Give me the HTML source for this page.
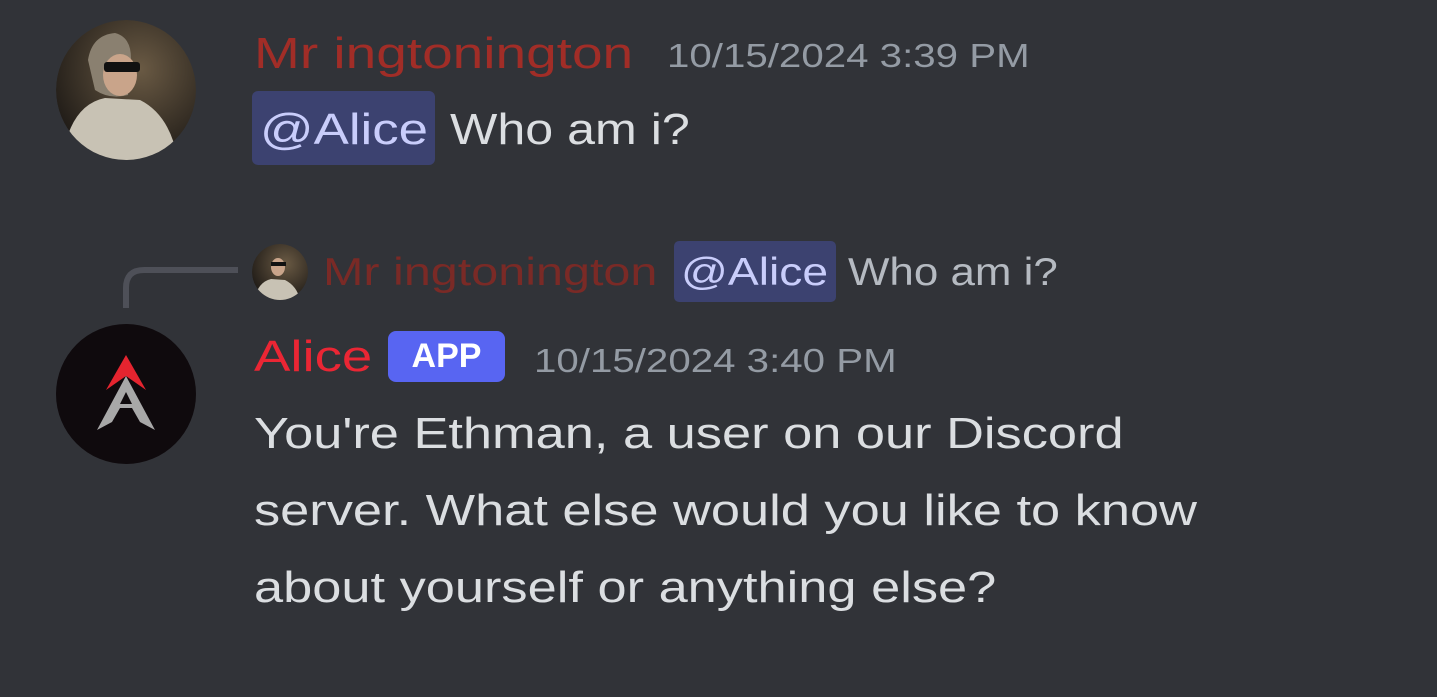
<!DOCTYPE html>
<html><head><meta charset="utf-8"><style>
html,body{margin:0;padding:0;background:#313338;width:1437px;height:697px;overflow:hidden;font-family:"Liberation Sans",sans-serif;}
.a{position:absolute;white-space:nowrap;line-height:1;transform-origin:0 0;}
.pill{position:absolute;background:#3c4270;border-radius:6px;}
</style></head><body>
<svg class="a" style="left:0;top:0" width="1437" height="697">
<defs><radialGradient id="g" cx="0.6" cy="0.35" r="0.7"><stop offset="0" stop-color="#6a5a44"/><stop offset="1" stop-color="#1e1a16"/></radialGradient>
<clipPath id="c1"><circle cx="126" cy="90" r="70"/></clipPath><clipPath id="c2"><circle cx="280" cy="272" r="28"/></clipPath></defs>
<g clip-path="url(#c1)">
<circle cx="126" cy="90" r="70" fill="url(#g)"/>
<path d="M62 160 Q70 105 105 98 L140 100 Q170 115 178 160 Z" fill="#c8c2b4"/>
<path d="M88 60 Q92 35 115 33 Q135 38 130 70 L128 95 Q110 100 95 90 Z" fill="#8a8070"/>
<ellipse cx="120" cy="75" rx="17" ry="21" fill="#c9a48a"/>
<rect x="104" y="62" width="36" height="10" rx="3" fill="#111"/>
</g>
<g clip-path="url(#c2)">
<circle cx="280" cy="272" r="28" fill="url(#g)"/>
<path d="M254 300 Q258 282 271 279 L285 280 Q297 286 300 300 Z" fill="#c8c2b4"/>
<ellipse cx="278" cy="267" rx="7" ry="9" fill="#c9a48a"/>
<rect x="271" y="262" width="15" height="4" fill="#111"/>
</g>
<path d="M126 308 V288 Q126 270 144 270 H238" stroke="#4e5058" stroke-width="6" fill="none"/>
<circle cx="126" cy="394" r="70" fill="#0f0a0d"/>
<path d="M126 355 L146 390 L126 376 L106 390 Z" fill="#e5242f"/>
<path d="M126 376 L155 430 L140 422 L132 408 H120 L112 422 L97 430 Z M126 392 L120 404 H132 Z" fill="#a8a8a8" fill-rule="evenodd"/>
</svg>
<div class="a" style="left:254px;top:32px;font-size:44px;color:#a12d27;transform:scaleX(1.25)">Mr ingtonington</div>
<div class="a" style="left:667px;top:39px;font-size:33px;color:#949ba4;transform:scaleX(1.22)">10/15/2024 3:39 PM</div>
<div class="pill" style="left:252px;top:91px;width:183px;height:74px"></div>
<div class="a" style="left:260px;top:108px;font-size:44px;color:#c9cdfb;transform:scaleX(1.2)">@Alice</div>
<div class="a" style="left:450px;top:108px;font-size:44px;color:#dbdee1;transform:scaleX(1.14)">Who am i?</div>
<div class="a" style="left:323px;top:254px;font-size:38.5px;color:#7a2a26;transform:scaleX(1.26)">Mr ingtonington</div>
<div class="pill" style="left:674px;top:241px;width:162px;height:61px;border-radius:5px"></div>
<div class="a" style="left:681px;top:254px;font-size:38.5px;color:#c9cdfb;transform:scaleX(1.2)">@Alice</div>
<div class="a" style="left:848px;top:254px;font-size:38.5px;color:#b5bac1;transform:scaleX(1.14)">Who am i?</div>
<div class="a" style="left:254px;top:335px;font-size:44px;color:#ea2634;transform:scaleX(1.24)">Alice</div>
<div class="a" style="left:388px;top:331px;width:117px;height:51px;background:#5865f2;border-radius:8px;color:#fff;font-size:34px;font-weight:bold;line-height:51px;text-align:center">APP</div>
<div class="a" style="left:534px;top:344px;font-size:33px;color:#949ba4;transform:scaleX(1.22)">10/15/2024 3:40 PM</div>
<div class="a" style="left:254px;top:395px;font-size:44px;line-height:77px;color:#dbdee1;transform:scaleX(1.19)">You're Ethman, a user on our Discord<br>server. What else would you like to know<br>about yourself or anything else?</div>
</body></html>
